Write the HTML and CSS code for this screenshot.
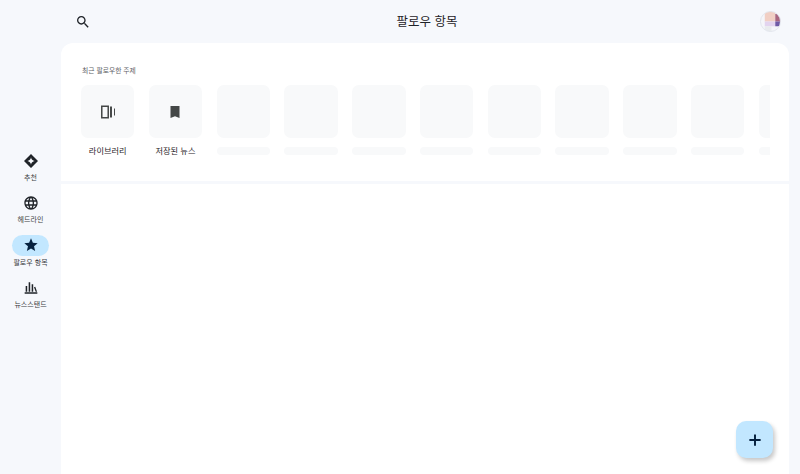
FILE: index.html
```html
<!DOCTYPE html>
<html lang="ko">
<head>
  <meta charset="UTF-8" />
  <meta name="viewport" content="width=device-width, initial-scale=1.0" />
  <title>팔로우 항목</title>
  <link rel="stylesheet" href="styles.css">
</head>
<body>
  <nav class="sidebar">
    <a class="nav-item">
      <span class="nav-icon">
        <svg viewBox="0 0 24 24" width="16" height="16"><path fill="#1f2328" fill-rule="evenodd" d="M12 1.500 22.500 12 12 22.500 1.500 12zM12 6.500c-.4 3-2.500 5.100-5.500 5.500 3 .4 5.100 2.500 5.500 5.500.4-3 2.500-5.100 5.500-5.500-3-.4-5.100-2.500-5.500-5.500z"/></svg>
      </span>
      <span class="nav-label">추천</span>
    </a>
    <a class="nav-item">
      <span class="nav-icon">
        <svg viewBox="0 0 24 24" width="16" height="16"><path fill="#1f2328" d="M11.990 2C6.470 2 2 6.480 2 12s4.470 10 9.990 10C17.520 22 22 17.520 22 12S17.520 2 11.990 2zm6.930 6h-2.950c-.32-1.250-.78-2.450-1.380-3.560 1.840.63 3.370 1.910 4.330 3.560zM12 4.040c.83 1.200 1.480 2.530 1.910 3.960h-3.820c.43-1.430 1.080-2.760 1.910-3.960zM4.260 14C4.100 13.360 4 12.690 4 12s.1-1.360.26-2h3.380c-.08.660-.14 1.320-.14 2s.06 1.340.14 2H4.260zm.82 2h2.950c.32 1.250.78 2.450 1.380 3.560-1.840-.63-3.370-1.900-4.330-3.560zm2.950-8H5.080c.96-1.660 2.490-2.930 4.330-3.560C8.810 5.550 8.350 6.750 8.030 8zM12 19.960c-.83-1.200-1.480-2.530-1.910-3.960h3.820c-.43 1.430-1.080 2.760-1.910 3.960zM14.340 14H9.660c-.09-.66-.16-1.320-.16-2s.07-1.350.16-2h4.680c.09.650.16 1.320.16 2s-.07 1.340-.16 2zm.25 5.560c.6-1.110 1.060-2.310 1.380-3.560h2.950c-.96 1.650-2.490 2.930-4.330 3.560zM16.360 14c.08-.66.14-1.320.14-2s-.06-1.340-.14-2h3.380c.16.640.26 1.310.26 2s-.1 1.360-.26 2h-3.380z"/></svg>
      </span>
      <span class="nav-label">헤드라인</span>
    </a>
    <a class="nav-item active">
      <span class="nav-icon">
        <svg viewBox="0 0 24 24" width="16" height="16"><path fill="#06213f" d="M12 17.270 18.180 21l-1.640-7.030L22 9.240l-7.190-.61L12 2 9.190 8.630 2 9.240l5.460 4.730L5.820 21z"/></svg>
      </span>
      <span class="nav-label">팔로우 항목</span>
    </a>
    <a class="nav-item">
      <span class="nav-icon">
        <svg viewBox="0 0 24 24" width="16" height="16"><path fill="#1f2328" d="M2.500 18.500h19v2.200h-19zM4 9h2.300v8.500H4zM8.500 3.500h2.300v14H8.500zM13 6.500h2.300v11H13zM16.500 11l1.900-.7 2.700 7.200h-2.100z"/></svg>
      </span>
      <span class="nav-label">뉴스스탠드</span>
    </a>
  </nav>

  <div class="content">
    <header class="topbar">
      <svg class="search-icon" viewBox="0 0 24 24" width="16" height="16"><path fill="#1f2328" d="M15.500 14h-.79l-.28-.27C15.410 12.590 16 11.110 16 9.500 16 5.910 13.090 3 9.500 3S3 5.910 3 9.500 5.910 16 9.500 16c1.610 0 3.090-.59 4.230-1.570l.27.28v.79l5 4.990L20.490 19l-4.990-5zm-6 0C7.010 14 5 11.990 5 9.500S7.010 5 9.500 5 14 7.010 14 9.500 11.990 14 9.500 14z"/></svg>
      <h1 class="page-title">팔로우 항목</h1>
      <svg class="avatar" viewBox="0 0 22 22" width="21" height="21">
        <defs><clipPath id="avatar-clip"><circle cx="11" cy="11" r="10.500"/></clipPath></defs>
        <g clip-path="url(#avatar-clip)">
          <rect width="22" height="22" fill="#f5f6fa"/>
          <rect x="5" y="0" width="11" height="11" fill="#f1cfc4"/>
          <rect x="16" y="3" width="6" height="8" fill="#a8657f"/>
          <rect x="5" y="11" width="11" height="5" fill="#e3d4ef"/>
          <rect x="16" y="11" width="5" height="5" fill="#6f5aa6"/>
          <rect x="5" y="16" width="7" height="6" fill="#e9ebee"/>
        </g>
        <circle cx="11" cy="11" r="10.500" fill="none" stroke="#e2e5ec"/>
      </svg>
    </header>

    <main class="panel">
      <section class="recent">
        <h2 class="recent-title">최근 팔로우한 주제</h2>
        <div class="topic-row">
          <div class="topic">
            <div class="tile">
              <svg viewBox="0 0 24 24" width="18" height="18"><path fill="#444746" fill-rule="evenodd" d="M2.700 3.300h10.600v17.400H2.700zM4.700 5.300v13.400h6.600V5.300zM14.700 4.700h2.600v14.600h-2.600zM20 7.300h1.300v9.400H20z"/></svg>
            </div>
            <span class="topic-label">라이브러리</span>
          </div>
          <div class="topic">
            <div class="tile">
              <svg viewBox="0 0 24 24" width="18" height="18"><path fill="#444746" d="M6 4h12v16l-6-2.500L6 20z"/></svg>
            </div>
            <span class="topic-label">저장된 뉴스</span>
          </div>
          <div class="topic"><div class="tile"></div><span class="skeleton"></span></div>
          <div class="topic"><div class="tile"></div><span class="skeleton"></span></div>
          <div class="topic"><div class="tile"></div><span class="skeleton"></span></div>
          <div class="topic"><div class="tile"></div><span class="skeleton"></span></div>
          <div class="topic"><div class="tile"></div><span class="skeleton"></span></div>
          <div class="topic"><div class="tile"></div><span class="skeleton"></span></div>
          <div class="topic"><div class="tile"></div><span class="skeleton"></span></div>
          <div class="topic"><div class="tile"></div><span class="skeleton"></span></div>
          <div class="topic"><div class="tile"></div><span class="skeleton"></span></div>
        </div>
      </section>
    </main>
  </div>

  <button class="fab" aria-label="추가">
    <svg viewBox="0 0 24 24" width="18" height="18"><path fill="#06213f" d="M19.500 13.300h-6.200v6.200h-2.600v-6.200H4.500v-2.600h6.200V4.500h2.600v6.200h6.200z"/></svg>
  </button>
</body>
</html>
```

FILE: styles.css
```css
body {
  font-family: "Noto Sans CJK KR", "Noto Sans", sans-serif;
  display: flex;
  height: 474px;
  margin: 0;
  overflow: hidden;
  background: #f6f8fc;
  color: #1f2328;
}

/* left rail */
.sidebar {
  width: 61px;
  flex-shrink: 0;
  padding-top: 150px;
  box-sizing: border-box;
  display: flex;
  flex-direction: column;
  align-items: center;
}
.nav-item {
  height: 42.4px;
  display: flex;
  flex-direction: column;
  align-items: center;
}
.nav-icon {
  width: 37px;
  height: 21px;
  border-radius: 11px;
  display: flex;
  align-items: center;
  justify-content: center;
}
.nav-item.active .nav-icon {
  background: #c2e7ff;
}
.nav-label {
  font-size: 7px;
  line-height: 12px;
  white-space: nowrap;
  color: #3c4043;
}

/* main column */
.content {
  flex: 1;
  display: flex;
  flex-direction: column;
  padding-right: 11px;
  min-width: 0;
}
.topbar {
  height: 43px;
  flex-shrink: 0;
  display: flex;
  align-items: center;
  justify-content: space-between;
  padding: 0 8px 0 14px;
}
.page-title {
  font-size: 12.500px;
  font-weight: 400;
  margin: 0 0 3px 3px;
}
.avatar {
  margin-bottom: 1px;
}

.panel {
  flex: 1;
  background: white;
  border-radius: 12px 12px 0 0;
}
.recent {
  height: 141px;
  box-sizing: border-box;
  padding: 21px 19px 0 20px;
  border-bottom: 3px solid #f6f8fc;
}
.recent-title {
  font-size: 6.800px;
  font-weight: 400;
  line-height: 12px;
  margin: 0 0 9px 1px;
  color: #5f6368;
}
.topic-row {
  display: flex;
  gap: 14.400px;
  overflow: hidden;
}
.topic {
  width: 53.400px;
  flex-shrink: 0;
  display: flex;
  flex-direction: column;
  align-items: center;
}
.tile {
  width: 100%;
  height: 53px;
  border-radius: 7px;
  background: #f8f9fa;
  display: flex;
  align-items: center;
  justify-content: center;
}
.topic-label {
  font-size: 8.200px;
  line-height: 12px;
  margin-top: 6px;
  white-space: nowrap;
}
.skeleton {
  width: 100%;
  height: 8px;
  margin-top: 9px;
  border-radius: 4px;
  background: #f8f9fa;
}

.fab {
  position: absolute;
  left: 736px;
  top: 421px;
  width: 37px;
  height: 37px;
  padding: 0;
  border: none;
  border-radius: 10px;
  background: #c2e7ff;
  box-shadow: 2px 3px 4px rgba(0, 0, 0, 0.22);
  display: flex;
  align-items: center;
  justify-content: center;
}
```
